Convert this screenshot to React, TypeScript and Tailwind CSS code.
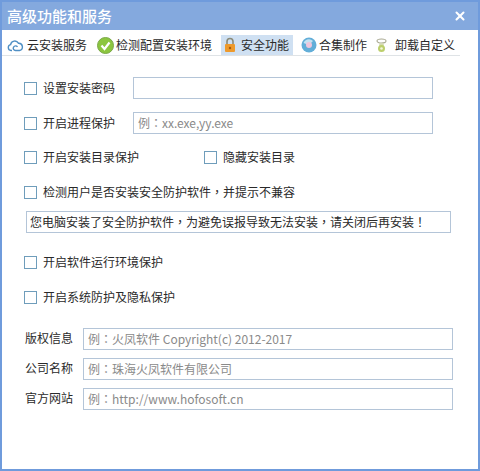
import { X } from 'lucide-react';

// full-width punctuation sits centred in the original, the TC face draws it that way
function Txt({ children }: { children: string }) {
  return (
    <>
      {children.split(/([，：！])/).map((part, i) =>
        i % 2 ? (
          <span key={i} className="font-['Noto_Sans_CJK_TC']">{part}</span>
        ) : (
          part
        ),
      )}
    </>
  );
}

function Check({ label, className = '' }: { label: string; className?: string }) {
  return (
    <label className={`flex items-center gap-[6px] ${className}`}>
      <span className="w-[13px] h-[13px] border border-[#6f9dbb] bg-white shrink-0" />
      <span><Txt>{label}</Txt></span>
    </label>
  );
}

function Box({ text, className = '' }: { text?: string; className?: string }) {
  return (
    <div className={`h-[22px] border border-[#b4c5d8] bg-white flex items-center pl-1 text-[#8a8a8a] ${className}`}>
      <span>{text && <Txt>{text}</Txt>}</span>
    </div>
  );
}

function CloudIcon() {
  return (
    <svg width="17" height="14" viewBox="0 0 17 14" fill="none" stroke="#4f8fc4" strokeWidth="1.4">
      <path d="M5 12.5H4A3 3 0 0 1 3.6 6.6 4.2 4.2 0 0 1 11.4 5.2 3.7 3.7 0 0 1 12.5 12.5H8.5a2.3 2.3 0 1 1 2-3.5" />
    </svg>
  );
}

function OkIcon() {
  return (
    <svg width="17" height="17" viewBox="0 0 17 17">
      <circle cx="8.5" cy="8.5" r="8" fill="#8cc63f" stroke="#7ba84a" />
      <path d="M4.5 8.5 7.5 12 12.5 5.5" fill="none" stroke="#fff" strokeWidth="2.2" />
    </svg>
  );
}

function LockIcon() {
  return (
    <svg width="14" height="16" viewBox="0 0 14 16">
      <path d="M4 7V4.5a3 3 0 0 1 6 0V7" fill="none" stroke="#8a8a78" strokeWidth="1.6" />
      <rect x="2" y="7" width="10" height="8" rx="1" fill="#ee9a2c" />
      <circle cx="7" cy="11" r="1.2" fill="#a65a10" />
    </svg>
  );
}

function DiscIcon() {
  return (
    <svg width="16" height="16" viewBox="0 0 16 16">
      <circle cx="8" cy="8" r="7.5" fill="#62aed8" />
      <path d="M2.5 6A6 6 0 0 1 8 2.2 6 6 0 0 1 12 4L8 8Z" fill="#c4e2f2" />
      <circle cx="8" cy="8" r="3" fill="#eec6dc" />
    </svg>
  );
}

function UninstallIcon() {
  return (
    <svg width="13" height="15" viewBox="0 0 13 15">
      <ellipse cx="6.5" cy="3" rx="4.5" ry="2" fill="none" stroke="#a8a890" strokeWidth="1.1" />
      <path d="M4.5 5.5h4L9 8H4Z" fill="#d5dcae" />
      <circle cx="6.5" cy="10.5" r="3.5" fill="#bccf6c" />
      <circle cx="6.5" cy="10.5" r="1.3" fill="#f4f6dc" />
    </svg>
  );
}

export default function App() {
  return (
    <div
      className="w-[480px] h-[471px] bg-white border-2 border-t-0 border-[#6f9bdc] text-[12px] leading-[22px] text-[#2a2a2a] flex flex-col overflow-hidden"
      style={{ fontFamily: '"Noto Sans CJK SC", "Noto Sans", sans-serif' }}
    >
      {/* title */}
      <div className="h-[30px] shrink-0 bg-[#84a9de] border-t-2 border-[#6f9bdc] flex items-center justify-between pl-[5px] pr-[11px] text-white text-[15px] font-medium">
        <span>高级功能和服务</span>
        <X size={14} strokeWidth={3.5} />
      </div>

      {/* tabs */}
      <div className="mt-[5px] mr-[18px] h-[21px] shrink-0 border-b border-[#dfe3e6] flex items-stretch pl-[5px]">
        <div className="flex items-center gap-[3px] w-[90px]"><CloudIcon />云安装服务</div>
        <div className="flex items-center gap-[2px] w-[124px]"><OkIcon />检测配置安装环境</div>
        <div className="flex items-center gap-[4px] w-[72px] bg-[#cfe0f2] pl-[2px]"><LockIcon />安全功能</div>
        <div className="flex items-center gap-[2px] w-[78px] pl-[8px]"><DiscIcon />合集制作</div>
        <div className="flex items-center gap-[7px] pl-[4px]"><UninstallIcon />卸载自定义</div>
      </div>

      <div className="flex flex-col pl-[22px]">
        <div className="mt-[21px] flex items-center">
          <Check label="设置安装密码" className="w-[109px]" />
          <Box className="w-[300px]" />
        </div>
        <div className="mt-[13px] flex items-center">
          <Check label="开启进程保护" className="w-[109px]" />
          <Box text="例：xx.exe,yy.exe" className="w-[300px]" />
        </div>
        <div className="mt-[12px] flex items-center">
          <Check label="开启安装目录保护" className="w-[180px]" />
          <Check label="隐藏安装目录" />
        </div>
        <div className="mt-[13px]">
          <Check label="检测用户是否安装安全防护软件，并提示不兼容" />
        </div>
        <div className="mt-[8px] ml-[2px] w-[425px] h-[22px] border border-[#b4c5d8] flex items-center pl-[3px]">
          <span><Txt>您电脑安装了安全防护软件，为避免误报导致无法安装，请关闭后再安装！</Txt></span>
        </div>
        <div className="mt-[18px]">
          <Check label="开启软件运行环境保护" />
        </div>
        <div className="mt-[13px]">
          <Check label="开启系统防护及隐私保护" />
        </div>
        <div className="mt-[20px] flex flex-col gap-[8px]">
          {[
            ['版权信息', '例：火凤软件 Copyright(c) 2012-2017'],
            ['公司名称', '例：珠海火凤软件有限公司'],
            ['官方网站', '例：http://www.hofosoft.cn'],
          ].map(([label, text]) => (
            <div key={label} className="flex items-center">
              <span className="w-[59px] pl-[1px] -mt-[2px]">{label}</span>
              <Box text={text} className="w-[370px]" />
            </div>
          ))}
        </div>
      </div>
    </div>
  );
}
